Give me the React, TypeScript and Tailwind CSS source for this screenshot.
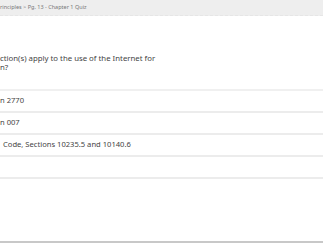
export default function App() {
  const options = ["n 2770", "n 007", "Code, Sections 10235.5 and 10140.6", ""];
  return (
    <div className="flex h-[243px] w-[323px] flex-col overflow-hidden bg-white font-['Noto_Sans',sans-serif]">
      <header className="flex h-[16px] shrink-0 items-center border-b border-dashed border-[#e6e6e6] bg-[#eeeeee] pr-px">
        <p className="whitespace-nowrap text-[5.5px] text-[#777]">
          rinciples &gt; Pg. 13 - Chapter 1 Quiz
        </p>
      </header>
      <main className="flex-1">
        <p className="mt-[38px] text-[7.8px] leading-[9px] text-[#444]">
          ction(s) apply to the use of the Internet for
          <br />
          n?
        </p>
        <ul className="mt-[17px] border-t-2 border-[#f0f0f0]">
          {options.map((o, i) => (
            <li
              key={i}
              className={`flex h-[22px] items-center border-b-2 border-[#ececec] text-[7.6px] text-[#444] ${i === 2 ? "pl-[3px]" : ""}`}
            >
              {o}
            </li>
          ))}
        </ul>
      </main>
      <div className="h-[2px] shrink-0 bg-[#c8c8c8]" />
    </div>
  );
}
